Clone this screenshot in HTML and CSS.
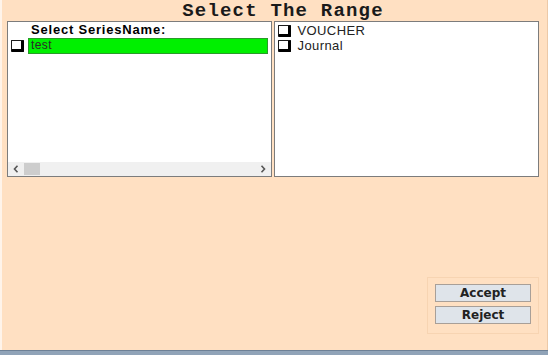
FILE: index.html
```html
<!DOCTYPE html>
<html lang="en">
<head>
  <meta charset="UTF-8">
  <title>Select The Range</title>
  <link rel="stylesheet" href="styles.css">
</head>
<body>
  <div class="frame">
    <h2 class="title">Select The Range</h2>
    <div class="lists">
      <div class="box left">
        <div class="list-body">
          <div class="head">Select SeriesName:</div>
          <div class="row">
            <span class="chk"></span>
            <span class="sel">test</span>
          </div>
        </div>
        <div class="hscroll">
          <span class="arrow">
            <svg width="6" height="8" viewBox="0 0 6 8"><path d="M4.5 0.8 L1.5 4 L4.5 7.2" fill="none" stroke="#555" stroke-width="1.6"/></svg>
          </span>
          <span class="thumb"></span>
          <span class="track"></span>
          <span class="arrow">
            <svg width="6" height="8" viewBox="0 0 6 8"><path d="M1.5 0.8 L4.5 4 L1.5 7.2" fill="none" stroke="#555" stroke-width="1.6"/></svg>
          </span>
        </div>
      </div>
      <div class="box right">
        <div class="item"><span class="chk"></span>VOUCHER</div>
        <div class="item"><span class="chk"></span>Journal</div>
      </div>
    </div>
    <div class="actions">
      <div class="btn-group">
        <button>Accept</button>
        <button>Reject</button>
      </div>
    </div>
  </div>
  <div class="bottom-bar"></div>
</body>
</html>
```

FILE: styles.css
```css
body {
  margin: 0;
  width: 548px;
  height: 355px;
  background: #ffe0c2;
  font-family: "Liberation Sans", Arial, sans-serif;
  overflow: hidden;
}
.frame {
  height: 350px;
  border-left: 2px solid #fff4ea;
  border-right: 1px solid #ecc9a8;
  box-sizing: border-box;
  padding: 0 8px 0 5px;
}
.title {
  margin: 0;
  height: 21px;
  font-family: "Liberation Mono", "Courier New", monospace;
  font-size: 19px;
  font-weight: bold;
  text-align: center;
  line-height: 22px;
  letter-spacing: 1.2px;
  padding-left: 20px;
  color: #1a1a1a;
}
.lists {
  display: flex;
  gap: 2px;
  height: 156px;
}
.box {
  background: #fff;
  border: 1px solid #7c7c7c;
  box-sizing: border-box;
  height: 156px;
}
.left {
  width: 265px;
  display: flex;
  flex-direction: column;
}
.right {
  width: 266px;
  padding: 1px 3px;
}
.list-body {
  flex: 1;
  padding: 1px 3px 0 3px;
}
.head {
  font-size: 13px;
  font-weight: bold;
  padding-left: 20px;
  line-height: 14px;
  letter-spacing: 0.8px;
}
.row {
  display: flex;
  align-items: center;
  gap: 4px;
  margin-top: 1px;
}
.chk {
  display: inline-block;
  width: 9px;
  height: 8px;
  border: 1px solid #1a1a1a;
  border-right: 3px solid #000;
  border-bottom: 3px solid #000;
  background: #fff;
  border-radius: 1px;
}
.sel {
  flex: 1;
  height: 14px;
  background: #00f000;
  border: 1px solid #2a9a2a;
  font-size: 12px;
  line-height: 13px;
  padding-left: 2px;
  letter-spacing: 0.4px;
  color: #2a2a2a;
}
.hscroll {
  height: 14px;
  background: #f0f0f0;
  display: flex;
  align-items: center;
}
.arrow {
  width: 16px;
  height: 14px;
  display: flex;
  align-items: center;
  justify-content: center;
}
.thumb {
  width: 16px;
  height: 12px;
  background: #cdcdcd;
}
.track {
  flex: 1;
}
.item {
  display: flex;
  align-items: center;
  gap: 7px;
  font-size: 13px;
  line-height: 15px;
  letter-spacing: 0.4px;
  color: #222;
}
.actions {
  display: flex;
  justify-content: flex-end;
  margin-top: 100px;
}
.btn-group {
  width: 112px;
  height: 57px;
  box-sizing: border-box;
  border: 1px solid #f7d4b2;
  padding: 6px 7px;
  display: flex;
  flex-direction: column;
  gap: 4px;
  margin-right: 0;
}
button {
  height: 18px;
  background: #dfe4ea;
  border: 1px solid #a89f98;
  font-family: Tahoma, "DejaVu Sans", sans-serif;
  font-size: 12px;
  font-weight: bold;
  color: #222;
  padding: 0;
}
.bottom-bar {
  height: 5px;
  background: #90a3b8;
  border-top: 1px solid #6d8096;
}
```
